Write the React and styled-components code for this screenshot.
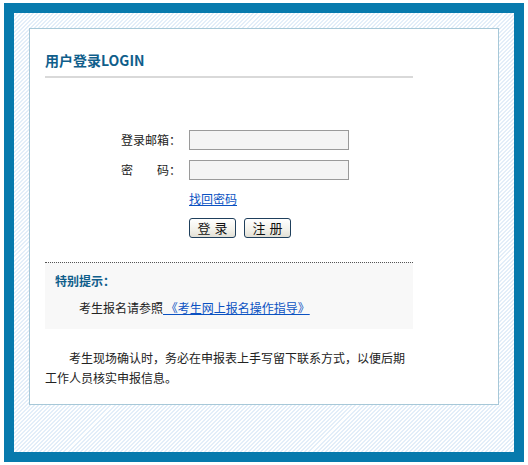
import React from "react";
import styled, { createGlobalStyle } from "styled-components";

const Global = createGlobalStyle`
  html, body { margin: 0; padding: 0; background: #fff; }
  body { font-family: "Noto Sans CJK SC", "Noto Sans", sans-serif; font-size: 12px; color: #222; }
`;

const Page = styled.div`
  padding: 3px 4px;
`;

const Frame = styled.div`
  box-sizing: border-box;
  width: 520px;
  height: 459px;
  border: 10px solid #077aad;
  padding: 15px;
  background: repeating-linear-gradient(135deg, #ffffff 0 1.42px, #e3eef9 1.42px 2.84px);
`;

const Panel = styled.div`
  box-sizing: border-box;
  width: 470px;
  height: 377px;
  background: #fff;
  border: 1px solid #a7c8d8;
  padding: 0 0 0 15px;
`;

const Column = styled.div`
  width: 368px;
`;

const Title = styled.h2`
  margin: 0;
  padding-top: 21px;
  height: 26px;
  line-height: 20px;
  font-size: 14px;
  font-weight: bold;
  color: #0f5e8b;
  border-bottom: 2px solid #d9d9d9;
  font-family: "Noto Sans CJK SC", "Liberation Sans", sans-serif;
`;

const Form = styled.div`
  display: grid;
  grid-template-columns: 136px 160px;
  column-gap: 8px;
  row-gap: 10px;
  margin-top: 52px;
  align-items: center;
`;

const Label = styled.label`
  text-align: right;
  line-height: 20px;
  white-space: pre;
`;

const Input = styled.input`
  box-sizing: border-box;
  width: 160px;
  height: 20px;
  border: 1px solid #9a9a9a;
  background: #f4f4f4;
  padding: 0 3px;
  margin: 0;
  font-size: 12px;
`;

const Cell = styled.div`
  grid-column: 2;
`;

const Link = styled.a`
  color: #0b52c2;
  text-decoration: underline;
  cursor: pointer;
`;

const Forgot = styled(Cell)`
  line-height: 16px;
  margin-top: 1px;
`;

const Buttons = styled(Cell)`
  display: flex;
  gap: 8px;
  margin-top: 1px;
`;

const Button = styled.button`
  box-sizing: border-box;
  width: 47px;
  height: 20px;
  padding: 0;
  margin: 0;
  border: 1px solid #1f3f5c;
  border-radius: 3px;
  background: linear-gradient(#ffffff, #f2f1ea 60%, #e2e0d6);
  font-family: "Noto Sans CJK SC", sans-serif;
  font-size: 13px;
  line-height: 18px;
  letter-spacing: 4px;
  text-indent: 4px;
  color: #111;
`;

const Notice = styled.div`
  margin-top: 24px;
  height: 67px;
  box-sizing: border-box;
  border-top: 1px dotted #555;
  background: #f8f8f8;
  padding: 10px 10px 0;
`;

const NoticeTitle = styled.div`
  font-weight: bold;
  color: #0f5e8b;
  line-height: 16px;
`;

const NoticeText = styled.div`
  margin-top: 11px;
  text-indent: 24px;
  line-height: 16px;
`;

const Para = styled.p`
  margin: 19px 0 0;
  text-indent: 24px;
  line-height: 20px;
  width: 368px;
`;

export default function App() {
  return (
    <>
      <Global />
      <Page>
        <Frame>
          <Panel>
            <Column>
              <Title>用户登录LOGIN</Title>
              <Form>
                <Label>登录邮箱：</Label>
                <Input type="text" />
                <Label>密　　码：</Label>
                <Input type="password" />
                <Forgot>
                  <Link>找回密码</Link>
                </Forgot>
                <Buttons>
                  <Button>登录</Button>
                  <Button>注册</Button>
                </Buttons>
              </Form>
              <Notice>
                <NoticeTitle>特别提示：</NoticeTitle>
                <NoticeText>
                  考生报名请参照<Link> 《考生网上报名操作指导》 </Link>
                </NoticeText>
              </Notice>
              <Para>
                考生现场确认时，务必在申报表上手写留下联系方式，以便后期工作人员核实申报信息。
              </Para>
            </Column>
          </Panel>
        </Frame>
      </Page>
    </>
  );
}
